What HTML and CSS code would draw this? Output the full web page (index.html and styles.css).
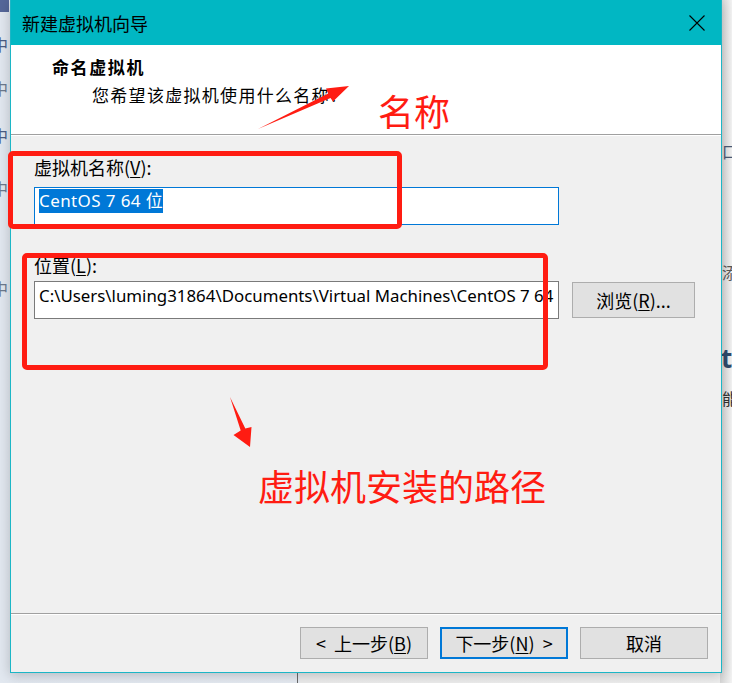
FILE: index.html
```html
<!DOCTYPE html>
<html lang="zh-CN">
<head>
<meta charset="utf-8">
<title>新建虚拟机向导</title>
<link rel="stylesheet" href="styles.css">
</head>
<body>
<div class="screen">
  <div class="desk-left"></div>
  <div class="desk-right"></div>
  <div class="desk-line"></div>
  <span class="frag f1">中</span>
  <span class="frag f2">中</span>
  <span class="frag f3">中</span>
  <span class="frag f4">中</span>
  <span class="frag f5">中</span>
  <span class="frag r1">口</span>
  <span class="frag r2">添</span>
  <span class="frag r3">ta</span>
  <span class="frag r4">能</span>

  <div class="dialog">
    <div class="titlebar">
      <span class="title">新建虚拟机向导</span>
      <svg class="close" width="16" height="16" viewBox="0 0 16 16"><path d="M0.5 0.5 L15.5 15.5 M15.5 0.5 L0.5 15.5" stroke="#000" stroke-width="1.1" fill="none"/></svg>
    </div>
    <div class="header">
      <div class="h-title">命名虚拟机</div>
      <div class="h-sub">您希望该虚拟机使用什么名称?</div>
    </div>
    <div class="body">
      <label class="lbl">虚拟机名称(<u>V</u>):</label>
      <div class="input focus"><span class="sel">CentOS 7 64 位</span></div>
      <label class="lbl lbl2">位置(<u>L</u>):</label>
      <div class="row">
        <div class="input path">C:\Users\luming31864\Documents\Virtual Machines\CentOS 7 64</div>
        <button class="btn browse">浏览(<u>R</u>)...</button>
      </div>
    </div>
    <div class="footer">
      <button class="btn">&lt;&nbsp;&nbsp;上一步(<u>B</u>)</button>
      <button class="btn primary">下一步(<u>N</u>)&nbsp;&nbsp;&gt;</button>
      <button class="btn">取消</button>
    </div>
  </div>

  <div class="mark box1"></div>
  <div class="mark box2"></div>
  <svg class="arrows" width="732" height="683" viewBox="0 0 732 683">
    <polygon points="258,129 330.5,98 333,101.5 349,86 326,88.5 328.2,93.5" fill="#ff1c12"/>
    <polygon points="230,397 245.3,428.6 251.5,427 250,447 233.5,435 240.7,430.4" fill="#ff1c12"/>
  </svg>
  <span class="note n1">名称</span>
  <span class="note n2">虚拟机安装的路径</span>
</div>
</body>
</html>
```

FILE: styles.css
```css
* { box-sizing: border-box; }
html, body { margin: 0; padding: 0; }
body {
  background: #f0f0f0;
  font-family: "Noto Sans CJK SC", sans-serif;
}
.screen {
  position: relative;
  width: 732px;
  height: 683px;
  overflow: hidden;
  background: linear-gradient(to right, #e2e8f0 0, #e6ebf2 300px, #ececec 300px, #efefef 100%);
}
.desk-left {
  position: absolute;
  left: 0; top: 0;
  width: 9px; height: 12px;
  background: #55679a;
}
.desk-right {
  position: absolute;
  right: 0; top: 0;
  width: 12px; height: 683px;
  background: linear-gradient(to right, #d6d6d6, #f3f3f3);
}
.desk-line {
  position: absolute;
  left: 297px; top: 672px;
  width: 1px; height: 11px;
  background: #6a6a6a;
}
.frag {
  position: absolute;
  font-size: 16px;
  line-height: 16px;
  color: #6d7a8e;
}
.f1 { left: -8px; top: 36px; color: #4a5d86; }
.f2 { left: -8px; top: 80px; }
.f3 { left: -8px; top: 127px; color: #4a5d86; }
.f4 { left: -8px; top: 180px; }
.f5 { left: -8px; top: 280px; }
.r1 { left: 722px; top: 143px; color: #4b5a75; }
.r2 { left: 722px; top: 264px; color: #5a5a5a; }
.r3 { left: 721px; top: 345px; font-size: 26px; line-height: 26px; font-weight: 700; color: #2f4a6b; font-family: "Open Sans", sans-serif; }
.r4 { left: 722px; top: 390px; color: #333; }

.dialog {
  position: absolute;
  left: 10px; top: 0;
  width: 712px; height: 673px;
  border: 1px solid #1cb6c6;
  border-top: 0;
  background: #f0f0f0;
  display: flex;
  flex-direction: column;
  box-shadow: 0 2px 12px rgba(0, 0, 0, 0.22);
}
.titlebar {
  height: 45px;
  flex: none;
  background: #01b7c3;
  display: flex;
  align-items: center;
  justify-content: space-between;
  padding: 0 16px 0 11px;
}
.title {
  font-size: 18px;
  color: #000;
  line-height: 24px;
}
.close { display: block; margin-top: 0; }

.header {
  height: 90px;
  flex: none;
  background: #fff;
  border-bottom: 1px solid #a0a0a0;
  padding: 10px 0 0 41px;
}
.h-title {
  font-size: 17px;
  line-height: 24px;
  font-weight: 700;
  letter-spacing: 1.6px;
  color: #000;
}
.h-sub {
  font-size: 17px;
  line-height: 24px;
  letter-spacing: 1.3px;
  margin: 4px 0 0 40px;
  color: #000;
}

.body {
  flex: 1;
  border-top: 1px solid #fff;
  padding: 19px 0 0 23px;
  display: flex;
  flex-direction: column;
  align-items: flex-start;
}
.lbl {
  font-size: 18px;
  line-height: 24px;
  color: #000;
  display: block;
}
.lbl u, .btn u { text-decoration-thickness: 1px; text-underline-offset: 2px; }
.lbl2 { margin-top: 28px; }
.input {
  width: 525px;
  height: 38px;
  margin-top: 8px;
  background: #fff;
  border: 1px solid #7a7a7a;
  padding: 1px 4px 0;
  font-family: "Segoe UI", "Noto Sans", "Noto Sans CJK SC", sans-serif;
  font-size: 17px;
  line-height: 24px;
  color: #000;
  white-space: nowrap;
  overflow: hidden;
}
.input.focus { border-color: #0078d7; }
.sel {
  background: #0078d7;
  color: #fff;
  display: inline-block;
  letter-spacing: 0.4px;
}
.row {
  display: flex;
  align-items: flex-start;
  gap: 13px;
  margin-top: 4px;
}
.row .input { margin-top: 0; padding-top: 2px; font-size: 16.85px; }

.btn {
  width: 128px;
  height: 32px;
  background: #e1e1e1;
  border: 1px solid #adadad;
  font-family: "Noto Sans CJK SC", sans-serif;
  font-size: 18px;
  line-height: 22px;
  color: #000;
  padding: 0;
  display: flex;
  align-items: center;
  justify-content: center;
}
.btn.browse {
  width: 123px;
  height: 36px;
  margin-top: 1px;
}
.btn.primary { border: 2px solid #0078d7; }

.footer {
  height: 59px;
  flex: none;
  border-top: 1px solid #a0a0a0;
  box-shadow: inset 0 1px 0 #fff;
  padding: 13px 13px 0 0;
  display: flex;
  justify-content: flex-end;
  align-items: flex-start;
  gap: 12px;
}

.mark {
  position: absolute;
  border: 5px solid #ff1c12;
  border-radius: 5px;
}
.box1 { left: 8px; top: 151px; width: 394px; height: 78px; }
.box2 { left: 22px; top: 253px; width: 526px; height: 117px; }
.arrows { position: absolute; left: 0; top: 0; }
.note {
  position: absolute;
  font-family: "Noto Sans CJK SC", sans-serif;
  font-size: 36px;
  line-height: 36px;
  color: #ff1c12;
}
.n1 { left: 378px; top: 92px; }
.n2 { left: 258px; top: 467px; }
```
